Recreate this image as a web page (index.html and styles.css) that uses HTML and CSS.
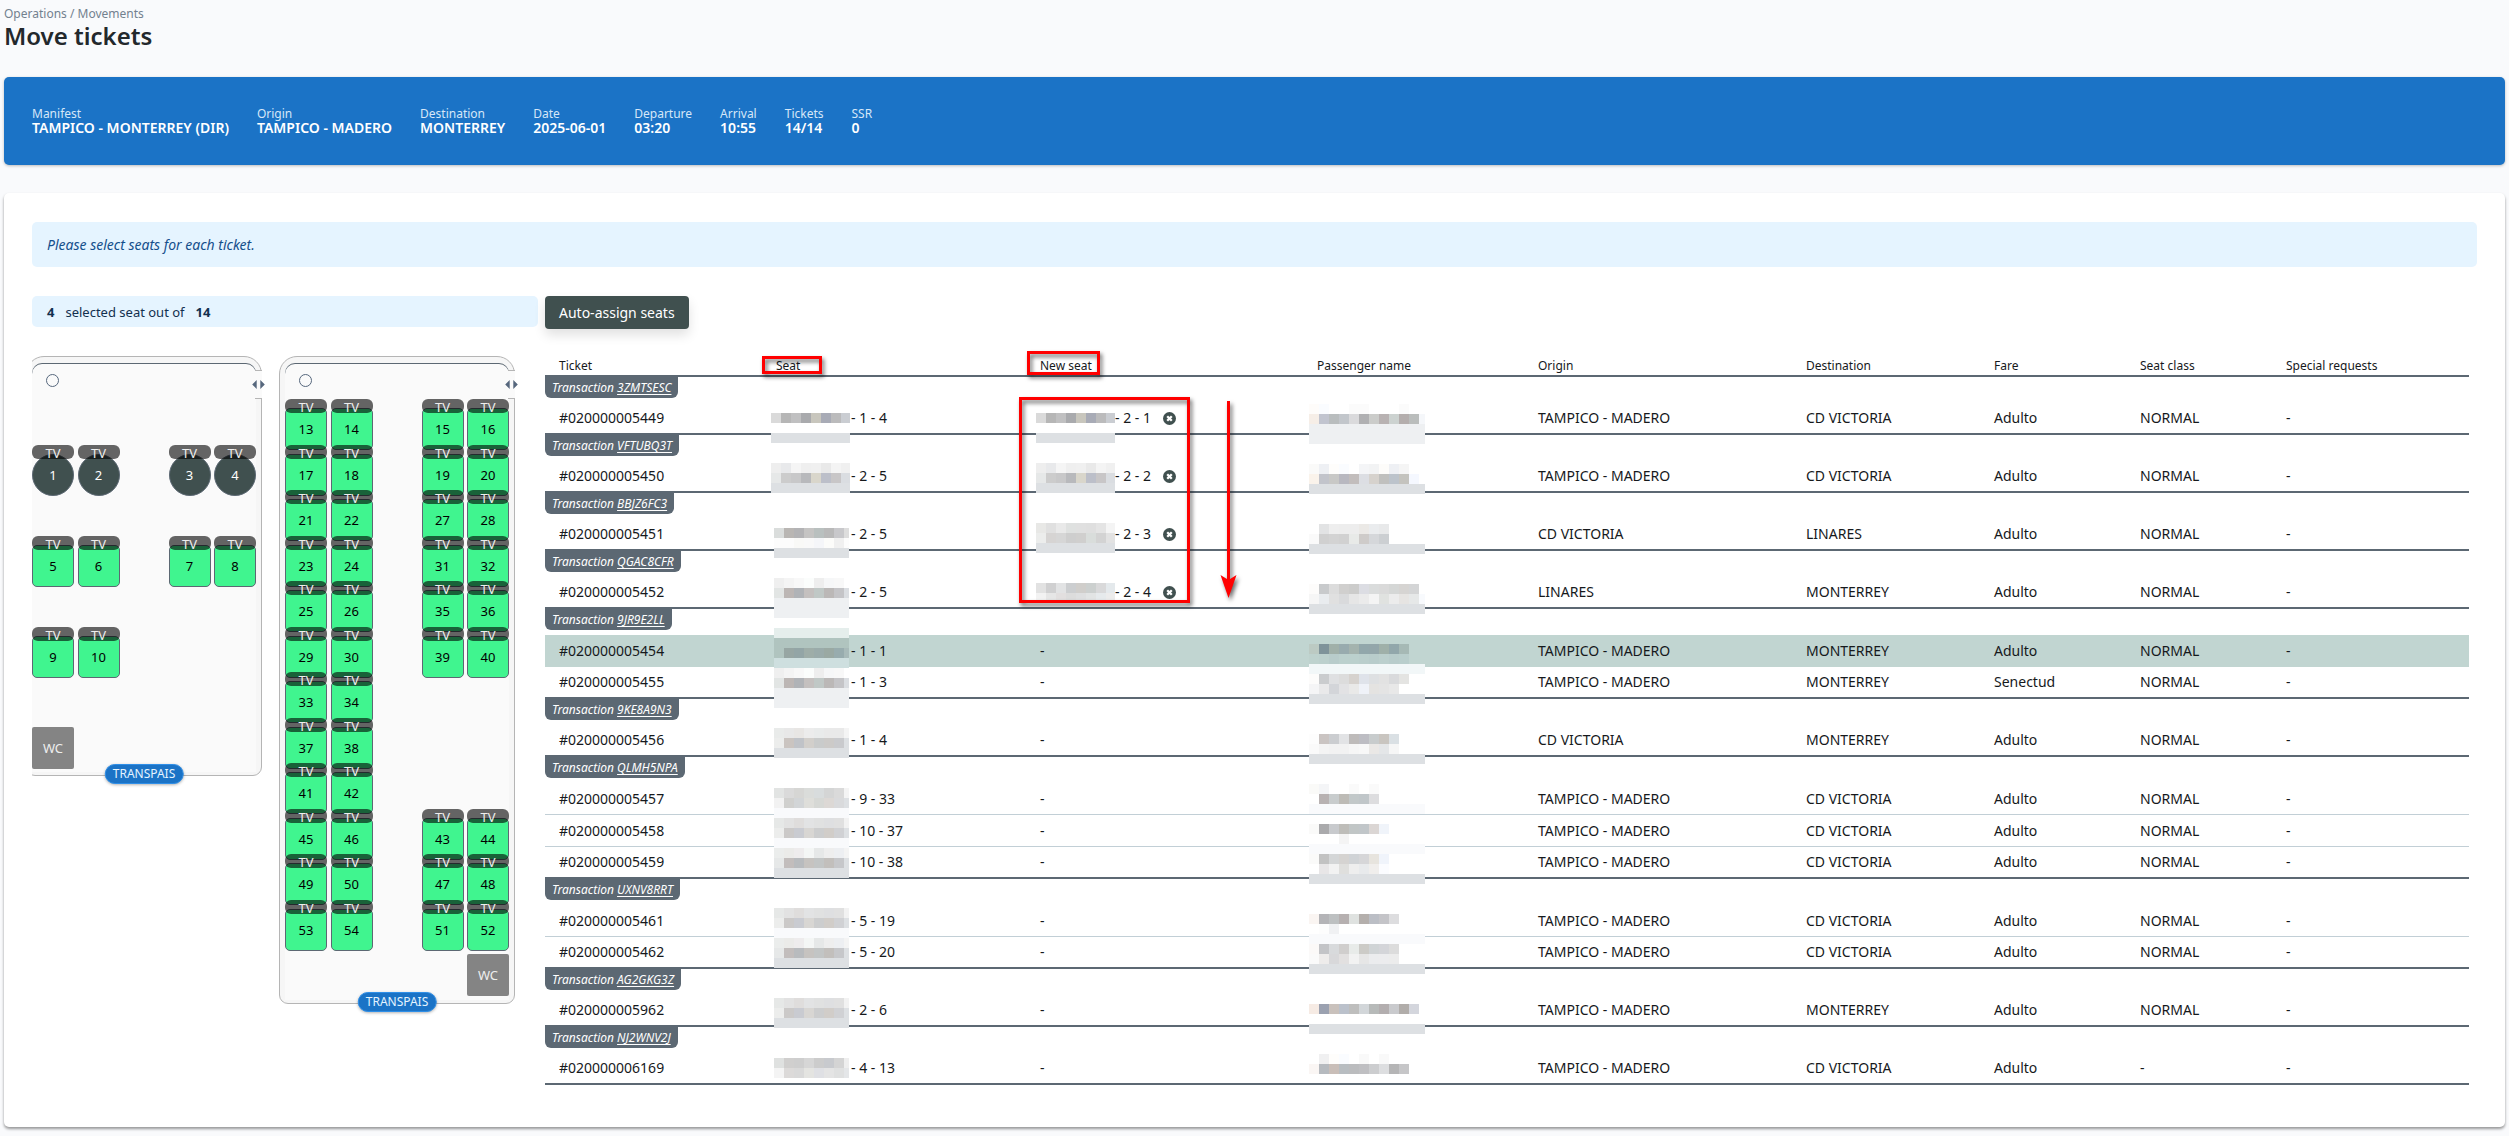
FILE: index.html
```
<!DOCTYPE html>
<html lang="en">
<head>
<meta charset="utf-8">
<title>Move tickets</title>
<link rel="stylesheet" href="styles.css">
</head>
<body>
<svg class="defs" aria-hidden="true">
  <symbol id="icon-remove" viewBox="0 0 16 16"><circle cx="8" cy="8" r="8" fill="#40504f"/><path d="M5.2 5.2l5.6 5.6M10.800 5.200l-5.600 5.600" stroke="#fff" stroke-width="2.800"/></symbol>
  <symbol id="icon-door" viewBox="0 0 14 10"><path d="M5 0v10L0 5zM9 0v10l5-5z" fill="#56677d"/></symbol>
</svg>
<div class="page">
  <header class="page-head">
    <nav class="crumbs">Operations / Movements</nav>
    <h1>Move tickets</h1>
  </header>

  <dl class="manifest">
    <div><dt>Manifest</dt><dd>TAMPICO - MONTERREY (DIR)</dd></div>
    <div><dt>Origin</dt><dd>TAMPICO - MADERO</dd></div>
    <div><dt>Destination</dt><dd>MONTERREY</dd></div>
    <div><dt>Date</dt><dd>2025-06-01</dd></div>
    <div><dt>Departure</dt><dd>03:20</dd></div>
    <div><dt>Arrival</dt><dd>10:55</dd></div>
    <div><dt>Tickets</dt><dd>14/14</dd></div>
    <div><dt>SSR</dt><dd>0</dd></div>
  </dl>

  <main class="card">
    <p class="notice">Please select seats for each ticket.</p>
    <div class="columns">
      <section class="seats">
        <p class="counter"><b>4</b><span>selected seat out of</span><b>14</b></p>
        <div class="decks">
          <div class="deck">
            <div class="cabin">
              <span class="wheel"></span>
              <button class="seat taken r3 c1">1</button><button class="seat taken r3 c2">2</button><button class="seat taken r3 c4">3</button><button class="seat taken r3 c5">4</button>
              <button class="seat r5 c1">5</button><button class="seat r5 c2">6</button><button class="seat r5 c4">7</button><button class="seat r5 c5">8</button>
              <button class="seat r7 c1">9</button><button class="seat r7 c2">10</button>
              <span class="wc r9 c1">WC</span>
            </div>
            <span class="door"><svg class="door-icon"><use href="#icon-door"/></svg></span>
            <span class="brand">TRANSPAIS</span>
          </div>
          <div class="deck">
            <div class="cabin">
              <span class="wheel"></span>
              <button class="seat r2 c1">13</button><button class="seat r2 c2">14</button><button class="seat r2 c4">15</button><button class="seat r2 c5">16</button>
              <button class="seat r3 c1">17</button><button class="seat r3 c2">18</button><button class="seat r3 c4">19</button><button class="seat r3 c5">20</button>
              <button class="seat r4 c1">21</button><button class="seat r4 c2">22</button><button class="seat r4 c4">27</button><button class="seat r4 c5">28</button>
              <button class="seat r5 c1">23</button><button class="seat r5 c2">24</button><button class="seat r5 c4">31</button><button class="seat r5 c5">32</button>
              <button class="seat r6 c1">25</button><button class="seat r6 c2">26</button><button class="seat r6 c4">35</button><button class="seat r6 c5">36</button>
              <button class="seat r7 c1">29</button><button class="seat r7 c2">30</button><button class="seat r7 c4">39</button><button class="seat r7 c5">40</button>
              <button class="seat r8 c1">33</button><button class="seat r8 c2">34</button>
              <button class="seat r9 c1">37</button><button class="seat r9 c2">38</button>
              <button class="seat r10 c1">41</button><button class="seat r10 c2">42</button>
              <button class="seat r11 c1">45</button><button class="seat r11 c2">46</button><button class="seat r11 c4">43</button><button class="seat r11 c5">44</button>
              <button class="seat r12 c1">49</button><button class="seat r12 c2">50</button><button class="seat r12 c4">47</button><button class="seat r12 c5">48</button>
              <button class="seat r13 c1">53</button><button class="seat r13 c2">54</button><button class="seat r13 c4">51</button><button class="seat r13 c5">52</button>
              <span class="wc r14 c5">WC</span>
            </div>
            <span class="door"><svg class="door-icon"><use href="#icon-door"/></svg></span>
            <span class="brand">TRANSPAIS</span>
          </div>
        </div>
      </section>

      <section class="tickets">
        <button class="assign">Auto-assign seats</button>
        <div class="table-wrap">
          <table>
            <colgroup><col class="w-ticket"><col class="w-seat"><col class="w-new"><col class="w-name"><col class="w-origin"><col class="w-dest"><col class="w-fare"><col class="w-class"><col class="w-ssr"></colgroup>
            <thead><tr><th>Ticket</th><th>Seat</th><th>New seat</th><th>Passenger name</th><th>Origin</th><th>Destination</th><th>Fare</th><th>Seat class</th><th>Special requests</th></tr></thead>
            <tbody>
              <tr class="group"><th colspan="9"><span class="tag">Transaction <a href="#">3ZMTSESC</a></span></th></tr>
              <tr><td>#020000005449</td><td><span class="masked">- 1 - 4</span></td><td><span class="masked">- 2 - 1</span><button class="remove" aria-label="Remove seat"><svg><use href="#icon-remove"/></svg></button></td><td></td><td>TAMPICO - MADERO</td><td>CD VICTORIA</td><td>Adulto</td><td>NORMAL</td><td>-</td></tr>
            </tbody>
            <tbody>
              <tr class="group"><th colspan="9"><span class="tag">Transaction <a href="#">VFTUBQ3T</a></span></th></tr>
              <tr><td>#020000005450</td><td><span class="masked">- 2 - 5</span></td><td><span class="masked">- 2 - 2</span><button class="remove" aria-label="Remove seat"><svg><use href="#icon-remove"/></svg></button></td><td></td><td>TAMPICO - MADERO</td><td>CD VICTORIA</td><td>Adulto</td><td>NORMAL</td><td>-</td></tr>
            </tbody>
            <tbody>
              <tr class="group"><th colspan="9"><span class="tag">Transaction <a href="#">BBJZ6FC3</a></span></th></tr>
              <tr><td>#020000005451</td><td><span class="masked">- 2 - 5</span></td><td><span class="masked">- 2 - 3</span><button class="remove" aria-label="Remove seat"><svg><use href="#icon-remove"/></svg></button></td><td></td><td>CD VICTORIA</td><td>LINARES</td><td>Adulto</td><td>NORMAL</td><td>-</td></tr>
            </tbody>
            <tbody>
              <tr class="group"><th colspan="9"><span class="tag">Transaction <a href="#">QGAC8CFR</a></span></th></tr>
              <tr><td>#020000005452</td><td><span class="masked">- 2 - 5</span></td><td><span class="masked">- 2 - 4</span><button class="remove" aria-label="Remove seat"><svg><use href="#icon-remove"/></svg></button></td><td></td><td>LINARES</td><td>MONTERREY</td><td>Adulto</td><td>NORMAL</td><td>-</td></tr>
            </tbody>
            <tbody>
              <tr class="group"><th colspan="9"><span class="tag">Transaction <a href="#">9JR9E2LL</a></span></th></tr>
              <tr class="current"><td>#020000005454</td><td><span class="masked">- 1 - 1</span></td><td>-</td><td></td><td>TAMPICO - MADERO</td><td>MONTERREY</td><td>Adulto</td><td>NORMAL</td><td>-</td></tr>
              <tr><td>#020000005455</td><td><span class="masked">- 1 - 3</span></td><td>-</td><td></td><td>TAMPICO - MADERO</td><td>MONTERREY</td><td>Senectud</td><td>NORMAL</td><td>-</td></tr>
            </tbody>
            <tbody>
              <tr class="group"><th colspan="9"><span class="tag">Transaction <a href="#">9KE8A9N3</a></span></th></tr>
              <tr><td>#020000005456</td><td><span class="masked">- 1 - 4</span></td><td>-</td><td></td><td>CD VICTORIA</td><td>MONTERREY</td><td>Adulto</td><td>NORMAL</td><td>-</td></tr>
            </tbody>
            <tbody>
              <tr class="group"><th colspan="9"><span class="tag">Transaction <a href="#">QLMH5NPA</a></span></th></tr>
              <tr><td>#020000005457</td><td><span class="masked">- 9 - 33</span></td><td>-</td><td></td><td>TAMPICO - MADERO</td><td>CD VICTORIA</td><td>Adulto</td><td>NORMAL</td><td>-</td></tr>
              <tr><td>#020000005458</td><td><span class="masked">- 10 - 37</span></td><td>-</td><td></td><td>TAMPICO - MADERO</td><td>CD VICTORIA</td><td>Adulto</td><td>NORMAL</td><td>-</td></tr>
              <tr><td>#020000005459</td><td><span class="masked">- 10 - 38</span></td><td>-</td><td></td><td>TAMPICO - MADERO</td><td>CD VICTORIA</td><td>Adulto</td><td>NORMAL</td><td>-</td></tr>
            </tbody>
            <tbody>
              <tr class="group"><th colspan="9"><span class="tag">Transaction <a href="#">UXNV8RRT</a></span></th></tr>
              <tr><td>#020000005461</td><td><span class="masked">- 5 - 19</span></td><td>-</td><td></td><td>TAMPICO - MADERO</td><td>CD VICTORIA</td><td>Adulto</td><td>NORMAL</td><td>-</td></tr>
              <tr><td>#020000005462</td><td><span class="masked">- 5 - 20</span></td><td>-</td><td></td><td>TAMPICO - MADERO</td><td>CD VICTORIA</td><td>Adulto</td><td>NORMAL</td><td>-</td></tr>
            </tbody>
            <tbody>
              <tr class="group"><th colspan="9"><span class="tag">Transaction <a href="#">AG2GKG3Z</a></span></th></tr>
              <tr><td>#020000005962</td><td><span class="masked">- 2 - 6</span></td><td>-</td><td></td><td>TAMPICO - MADERO</td><td>MONTERREY</td><td>Adulto</td><td>NORMAL</td><td>-</td></tr>
            </tbody>
            <tbody>
              <tr class="group"><th colspan="9"><span class="tag">Transaction <a href="#">NJ2WNV2J</a></span></th></tr>
              <tr><td>#020000006169</td><td><span class="masked">- 4 - 13</span></td><td>-</td><td></td><td>TAMPICO - MADERO</td><td>CD VICTORIA</td><td>Adulto</td><td>-</td><td>-</td></tr>
            </tbody>
          </table>
          <svg class="overlay" aria-hidden="true">
            <g id="mosaics" shape-rendering="crispEdges"></g>
            <g class="marks">
              <rect x="218.500" y="8.500" width="57" height="15"/>
              <rect x="483.500" y="3.500" width="70" height="21"/>
              <rect x="475.500" y="49.500" width="168" height="203"/>
              <path class="shaft" d="M683.500 52v182"/>
              <path class="head" d="M683.500 249l-8-23 8 5 8-5z"/>
            </g>
          </svg>
        </div>
      </section>
    </div>
  </main>
</div>
<script src="mosaic.js"></script>
</body>
</html>
```
FILE: styles.css
```
* { box-sizing: border-box; }
body {
  margin: 0;
  background: #f9fafc;
  color: #16191c;
  font: 14px/18px "Noto Sans", "Open Sans", sans-serif;
}
h1, p, dl, dd { margin: 0; }
button { font: inherit; border: 0; padding: 0; cursor: pointer; }
.defs { position: absolute; width: 0; height: 0; }

.page { padding: 6px 4px 9px; }
.crumbs { color: #73818f; font-size: 12px; line-height: 16px; }
h1 { color: #23282c; font-size: 24px; line-height: 28px; font-weight: 600; }

.manifest {
  display: flex;
  gap: 28px;
  margin-top: 27px;
  padding: 30px 28px;
  border-radius: 5px;
  background: #1b73c6;
  color: #fff;
  box-shadow: 0 1px 3px rgba(0, 0, 0, .25);
  line-height: 14px;
}
.manifest dt { font-size: 12px; color: #d6e7f8; }
.manifest dd { font-weight: 600; }

.card {
  margin-top: 28px;
  padding: 29px 28px 42px;
  border-radius: 5px;
  background: #fff;
  box-shadow: 0 2px 3px rgba(0, 0, 0, .4);
}
.notice {
  padding: 14px 15px 13px;
  border-radius: 5px;
  background: #e5f4ff;
  color: #154f8c;
  font-style: italic;
}
.columns {
  display: grid;
  grid-template-columns: 506px minmax(0, 1fr);
  gap: 7px;
  margin-top: 29px;
}
.counter {
  display: flex;
  gap: 11px;
  height: 31px;
  padding: 0 15px;
  align-items: center;
  border-radius: 5px;
  background: #e5f4ff;
  color: #12304f;
  font-size: 13px;
}

.decks {
  display: flex;
  align-items: flex-start;
  gap: 17px;
  margin-top: 25px;
  padding: 4px 0 20px;
  overflow: hidden;
  font-size: 13px;
}
.deck {
  position: relative;
  flex: none;
  width: 236px;
  padding: 6px 5px 3px;
  border: 1px solid #b5b5b5;
  border-radius: 18px 18px 9px 9px;
  background: #f6f6f6;
}
.deck:first-child { margin-left: -6px; }
.cabin {
  display: grid;
  grid-template-columns: repeat(5, 42px);
  grid-auto-rows: 45px 46px;
  justify-content: space-between;
  border-radius: 10px 10px 0 0;
  background: #fafafa;
  box-shadow: inset 0 1px #5c6873;
}
.wheel {
  grid-area: 1 / 1;
  width: 13px;
  height: 13px;
  margin: 11px 0 0 14px;
  border: 1px solid #56677d;
  border-radius: 50%;
}
.seat {
  position: relative;
  height: 42px;
  border: 1px solid #5c6873;
  border-radius: 5px;
  background: #40f58f;
  color: #000;
}
.seat::before {
  content: "TV";
  position: absolute;
  inset: -10px -1px auto;
  height: 14px;
  border-radius: 6px;
  background: rgba(0, 0, 0, .6);
  color: #eee;
  line-height: 16px;
}
.taken { border-radius: 50%; background: #40504f; color: #fff; }
.wc {
  display: grid;
  place-items: center;
  height: 42px;
  border-radius: 2px;
  background: #848484;
  color: #eee;
}
.c1 { grid-column: 1; }
.c2 { grid-column: 2; }
.c4 { grid-column: 4; }
.c5 { grid-column: 5; }
.r2 { grid-row: 2; }
.r3 { grid-row: 3; }
.r4 { grid-row: 4; }
.r5 { grid-row: 5; }
.r6 { grid-row: 6; }
.r7 { grid-row: 7; }
.r8 { grid-row: 8; }
.r9 { grid-row: 9; }
.r10 { grid-row: 10; }
.r11 { grid-row: 11; }
.r12 { grid-row: 12; }
.r13 { grid-row: 13; }
.r14 { grid-row: 14; }
.door {
  position: absolute;
  top: 13px;
  right: -1px;
  width: 7px;
  height: 29px;
  border: solid #b5b5b5;
  border-width: 1px 0;
  background: #fafafa;
}
.door-icon {
  position: absolute;
  top: 9px;
  left: -3px;
  width: 13px;
  height: 9px;
}
.brand {
  position: absolute;
  bottom: -9px;
  left: 50%;
  transform: translateX(-50%);
  padding: 0 7px;
  border: 1px solid #2f8fe8;
  border-radius: 11px;
  background: #1b73c6;
  color: #e5f4ff;
  font-size: 12px;
  box-shadow: 0 1px 3px rgba(0, 0, 0, .3);
}

.tickets { padding-right: 8px; }
.assign {
  height: 33px;
  padding: 0 14px;
  border-radius: 4px;
  background: #40504f;
  color: #fff;
  box-shadow: 0 6px 12px rgba(0, 0, 0, .12);
}
.table-wrap { position: relative; margin-top: 20px; }
table {
  width: 100%;
  table-layout: fixed;
  border-collapse: separate;
  border-spacing: 0;
}
.w-ticket { width: 217px; }
.w-seat { width: 264px; }
.w-new { width: 277px; }
.w-name { width: 221px; }
.w-origin { width: 268px; }
.w-dest { width: 188px; }
.w-fare { width: 146px; }
.w-class { width: 146px; }
.w-ssr { width: 197px; }
th { font-weight: 400; text-align: left; }
thead th {
  height: 28px;
  padding: 8px 14px 0;
  border-bottom: 2px solid #5c6873;
  font-size: 12px;
  line-height: 18px;
}
.group th { height: 26px; padding: 0; vertical-align: top; }
.tag {
  display: block;
  width: fit-content;
  height: 21px;
  padding: 0 7px;
  border-radius: 0 0 6px 6px;
  background: #5c6873;
  color: #fff;
  font-size: 12px;
  line-height: 22px;
  font-style: italic;
}
.tag a { color: inherit; text-underline-offset: 2px; }
td {
  height: 32px;
  padding: 0 14px;
  border-bottom: 1px solid #c2cfd6;
  white-space: nowrap;
}
tr:last-child td { border-bottom: 2px solid #5c6873; }
.current td { border-color: transparent; background: #c1d5d1; }
.masked { padding-left: 75px; }
.remove {
  width: 13px;
  height: 13px;
  margin-left: 12px;
  background: none;
  vertical-align: -2px;
}
.remove svg { display: block; width: 13px; height: 13px; }
.overlay {
  position: absolute;
  top: 0;
  left: 0;
  width: 100%;
  height: 100%;
  overflow: visible;
  pointer-events: none;
}
.marks { fill: none; stroke: #f00; stroke-width: 3; filter: drop-shadow(2px 3px 2px rgba(0, 0, 0, .6)); }
.marks .head { fill: #f00; stroke: none; }
```
FILE: mosaic.js
```
// Redaction mosaics drawn over seat service codes and passenger names.
// Each entry: x, y, width, then rows of 10px cells. A cell is a two-digit grey
// or a six-digit colour; "*" after a colour fills the rest of the row.
const LINE = "dde0e3*", SOFT = "f9fafc*", PALE = "eef0f2*";
const A = ["da b6 c0c0c1 a9aaad c8c6bd a8abb6 bbbbbc cacdd2", "ff*", LINE];
const B = ["ee e8e9eb f5 ef f0 e9 f4 f0", "e6e8e8 cc c8c8c9 b8b9bc d9d6cb bcbfc9 c8c6c7 dadde1", LINE];
const D = ["ef f4 f8 fbfdfc ee f6f7f8 f8", "e2e5e4 bcb6b4 b0b3b7 c4c0bf c0c8c6 bbb8b7 c4c4c7 dadde1", PALE, PALE];
const H = ["e6e8e7 e2 dfdddc e2e3e4 e0e1e1 dedfe1 e0 f2", "ecedec cbc9c8 c9cbd1 d8d6d3 cccdce d1cdc9 d0d1d4 dde0e3"];
const I = ["ebedec ebebe9 eeeced f4f6f5 e6e8e8 ee edeff2 f4", "e6e8e8 c2bdbc b8bbbe c6c3c0 c2c5c5 c2bfbc c6c7ca dde0e3", LINE];
const mosaics = [
  [226, 64, 79, A],
  [226, 114, 79, B],
  [229, 179, 75, ["dadddc b9b6b3 b3b3b5 c5c4c3 b9c0bf b9b9b9 c8c8cb dd", "fc fc f9f9f7 f9 f5f6f9 fcfcfa f0 fc", LINE]],
  [229, 229, 75, D],
  [229, 279, 75, ["e5eeec*", "b0c4bf*", "b0c4bf 97a6a3 93a5a6 9eada8 9aabaa 9aa9a3 98acae a8bab9", "cedfdf*"].concat(D)],
  [229, 379, 75, ["e9ebea e8 e8e6e4 ec e9ebeb e9 e9 f4", "ecedec cac4c0 c0c3c8 d2cfcb c9cbcb cccac8 c9cacd dde0e3", LINE]],
  [229, 439, 75, ["e2e4e3 da d6d6d4 dadcda d8dcdd d4d5d5 da f4", "f2 d0d0ce d2d5d7 dededa d6d8d5 dcd8d5 d9dadc dde0e3", SOFT].concat(H, [SOFT], I)],
  [229, 559, 75, H.concat([SOFT], I)],
  [229, 649, 75, H.concat([LINE])],
  [229, 709, 75, ["dfe1e0 d0cfce ce d6 cc c8cace d4 ee", "f4 dcdad9 d9 e4e4e1 dfe0e4 e4 dfe0e0 e4e6e8"]],
  [491, 64, 79, A],
  [491, 114, 79, B],
  [491, 174, 79, ["e8e8e6 e0 e9 dfe1e0 e0 df e4 f4", "ecedec d6d4d3 d6 cecece d0cfce d9dddb d3 e2", LINE]],
  [491, 234, 79, ["e2 d0d0d1 e2e3e4 ccced0 d0cecb ccd0cf d9d9da e4e9ec", "f2 e6 e2dfdf dc dedfe0 e2e4e4 e6eaec ec"]],
  [764, 55, 116, ["fefcfa fafcff ff ff fb fb ff ff ff fb", "f6eee7 c1c4cf b9bdbe c2c6cb dadadc b0b0b2 cbccca b8b2b2 ccd2d0 b4aead babdbc f5f7fa", PALE, PALE]],
  [764, 115, 116, ["fafaf9 eef0f4 fefdfb fafcff ff f4f5f7 f2f3f4 fdfcfa eef0f4 f5", "faf3eb c2c4cb c8c8c6 b8b8c0 c2bdbc dcdee3 d6d2cd c0c0be bcc3cb c4c3be f5f8ff", LINE]],
  [764, 175, 116, ["ff e2e3e4 ee ed ed ebe9e6 eaecee e8e9ea", "fa d0 d3 d1 e8eae8 cecbc9 d5d7da cccfd2", LINE]],
  [764, 235, 116, ["fdfcfb c8cacc dc d0cfce cccccb dcdde3 dadcdc da d5d7d6 d6d4d2 d4d5d6", "f6 e9ecef e0 d9dadc e6 eb f4 e0e2e0 ec e6e4e2 e6e8e8 f8fafd", LINE]],
  [764, 295, 116, ["bccac3 7f939a a0b0a9 98abae a4b3ae 92a7ab 93a6aa 9fb0a9 92a7ab a6b9b5", "bed2ce bcd0cd b8cccb bbd0cd bbd0cd bacecc b8cccb bbcfcd b8cccb b9cecc", "f2f7f8*", "fdfcfb caccce dfe0e2 dc d6d2ce dfe3ea dee0e2 e2 d9dadc e4e4e2", "f5f5f6 e9e9ea d3d5d9 e2e2e4 e9e9e8 eff2f8 e4e3e1 e4 e8", LINE]],
  [764, 385, 116, ["fd cac4c2 cbcdd0 e2e3e5 bebbba bdbdc3 c8cccd c9c5c0 dae0e4", "fa f4 f2 f2 f6 f8 eae8e6 e4e6e8 f6", LINE]],
  [764, 435, 116, ["fafaf8 f4f5f7 ff ff fa ff fa", "ff b8b2b2 c8cccd bdbbb6 c2c8c9 c0c6c9 dddddf", SOFT]],
  [764, 475, 116, ["fafaf9 aaaaac c8cacd bebdb9 c1c6c6 c1c6c9 dbd6d4 f0f4fa", "ff ff ff f4 ff*", SOFT, "fafaf9 c2c2c2 d4d6d7 d5d3d1 d0d3d6 d6d6d8 e7e4de f0f4fb", "ff e8e6e7 f2 dfdfdd ee e8eaec f0eeec fbfcff", LINE]],
  [764, 565, 116, ["faf5f2 b4b4b7 bdc0c1 b6b0b0 dfe2e0 b4afac bbbec5 c4c4c8 dddddf", "ff fd f0f1f3", SOFT, "fbf9f8 c3c4c7 d8dadc d0cecd e8ebe9 cccbc7 d0d4d6 d4d5d9 dc", "fa eeeceb d8d8da e2e0e0 f2 e6 ebecee ececee ec", LINE]],
  [764, 655, 116, ["f6ebe4 9ba1b0 c9c1bc bbc1cb bebebd d2d6d9 b7bab9 b3aeaf c9cacd b1adaa d4d6dd", "ff*", LINE]],
  [764, 705, 116, ["ff f0f0f1 fefdfb fafcff ff f9 ff f9", "faf6f4 b6babf c9beb8 b8bdc1 bbbcbe bfbfc2 cccdcf dddee0 b5b5b6 c6c6c8"]]
];

const layer = document.getElementById("mosaics");
const addRect = (x, y, width, color) => {
  const rect = document.createElementNS("http://www.w3.org/2000/svg", "rect");
  const attributes = { x, y, width, height: 10, fill: "#" + (color.length === 2 ? color.repeat(3) : color) };
  for (const name in attributes) rect.setAttribute(name, attributes[name]);
  layer.append(rect);
};
for (const [left, top, width, rows] of mosaics) {
  rows.forEach((row, line) => {
    row.split(" ").forEach((cell, column) => {
      const offset = column * 10;
      const rest = width - offset;
      addRect(left + offset, top + line * 10, cell.endsWith("*") ? rest : Math.min(10, rest), cell.replace("*", ""));
    });
  });
}
```
